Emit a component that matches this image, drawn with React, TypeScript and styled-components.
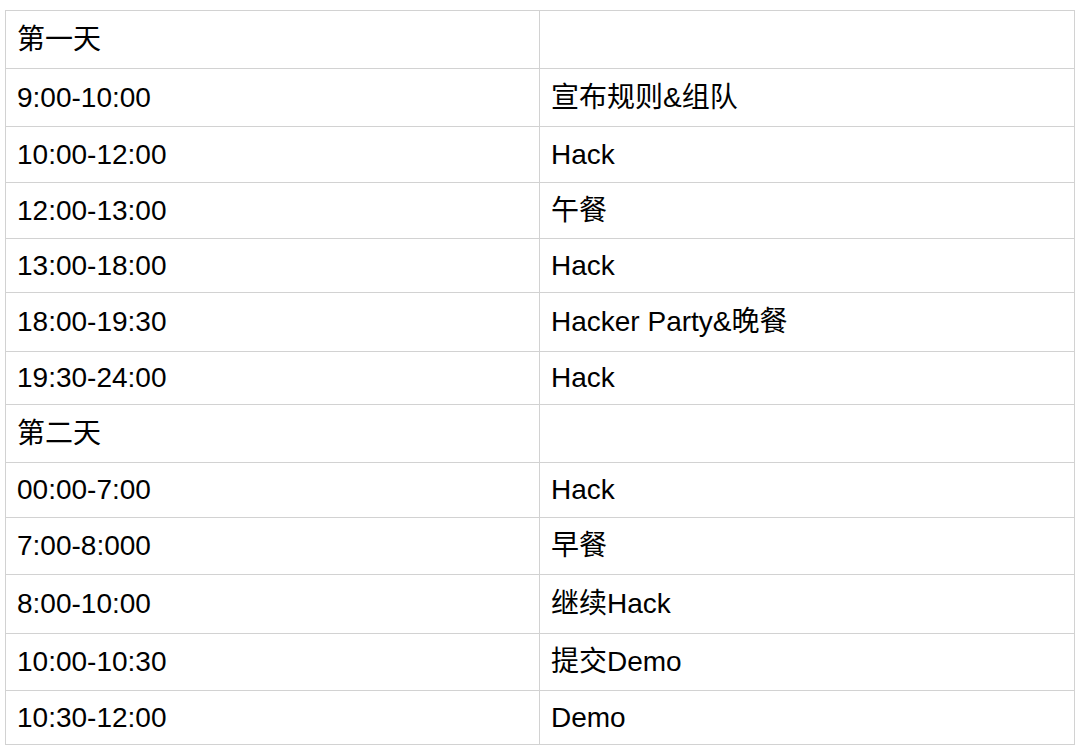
import styled, { createGlobalStyle } from "styled-components";

const GlobalStyle = createGlobalStyle`
  html, body {
    margin: 0;
    padding: 0;
    background: #ffffff;
  }
  body {
    font-family: "Liberation Sans", Arial, "Noto Sans CJK SC", sans-serif;
    color: #000000;
  }
`;

const Page = styled.div`
  width: 1080px;
  height: 748px;
  padding: 10px 6px 0 5px;
  box-sizing: border-box;
`;

const Table = styled.table`
  width: 100%;
  border-collapse: collapse;
  table-layout: fixed;
  font-size: 28px;
`;

const Row = styled.tr<{ $h: number }>`
  height: ${(p) => p.$h}px;
`;

const Cell = styled.td`
  border: 1.5px solid #d2d2d2;
  padding: 0 0 0 11px;
  vertical-align: middle;
  line-height: 1;
  white-space: nowrap;
`;

const Col = styled.col<{ $w: number }>`
  width: ${(p) => p.$w}px;
`;

// time, activity, row height
const schedule: [string, string, number][] = [
  ["第一天", "", 58],
  ["9:00-10:00", "宣布规则&组队", 58],
  ["10:00-12:00", "Hack", 56],
  ["12:00-13:00", "午餐", 56],
  ["13:00-18:00", "Hack", 54],
  ["18:00-19:30", "Hacker Party&晚餐", 59],
  ["19:30-24:00", "Hack", 53],
  ["第二天", "", 58],
  ["00:00-7:00", "Hack", 55],
  ["7:00-8:000", "早餐", 57],
  ["8:00-10:00", "继续Hack", 59],
  ["10:00-10:30", "提交Demo", 57],
  ["10:30-12:00", "Demo", 54],
];

function App() {
  return (
    <>
      <GlobalStyle />
      <Page>
        <Table>
          <colgroup>
            <Col $w={534} />
            <Col $w={535} />
          </colgroup>
          <tbody>
            {schedule.map(([time, what, h], i) => (
              <Row key={i} $h={h}>
                <Cell>{time}</Cell>
                <Cell>{what}</Cell>
              </Row>
            ))}
          </tbody>
        </Table>
      </Page>
    </>
  );
}

export default App;
